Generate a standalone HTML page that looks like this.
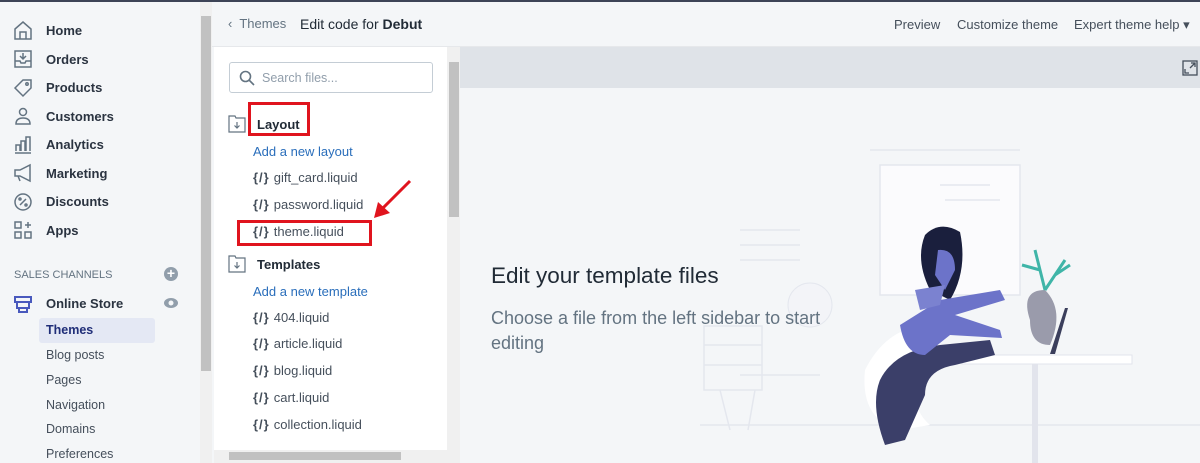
<!DOCTYPE html>
<html><head><style>
*{margin:0;padding:0;box-sizing:border-box}
body{width:1200px;height:463px;overflow:hidden;background:#f4f6f8;font-family:"Liberation Sans",sans-serif;position:relative;color:#212b36}
.topline{position:absolute;left:0;top:0;width:1200px;height:2px;background:#3d4457}
.side{position:absolute;left:0;top:2px;width:200px;height:461px;background:#f4f6f8}
.nav{position:absolute;left:46px;font-size:13px;font-weight:bold;color:#2a3340}
.ic{position:absolute;left:13px}
.sub{position:absolute;left:46px;font-size:12.5px;color:#454f5b}
.sb{position:absolute;background:#f0f0f0}
.thumb{position:absolute;background:#c1c1c1}
.hdr{position:absolute;left:212px;top:2px;width:988px;height:45px;background:#f4f6f8;border-bottom:1px solid #e6e8eb}
.files{position:absolute;left:214px;top:47px;width:233px;height:416px;background:#fff}
.fn{position:absolute;left:253px;font-size:13px;color:#454f5b}
.fn b{font-weight:bold;color:#454f5b;letter-spacing:1px;margin-right:4px}
.lnk{position:absolute;left:253px;font-size:13px;color:#2a6ebb}
.red{position:absolute;border:3px solid #e0141e}
</style></head><body>
<div class="topline"></div>
<div class="side">
<svg class="ic" style="top:18px" width="20" height="20" fill="none" stroke="#637381" stroke-width="1.5"><path d="M2 9 L10 2 L18 9 V19 H2 Z M7 19 V12 H13 V19"/></svg>
<div class="nav" style="top:21px">Home</div>
<svg class="ic" style="top:47px" width="20" height="20" fill="none" stroke="#637381" stroke-width="1.5"><rect x="2" y="2" width="16" height="16"/><path d="M2 12 H7 L8 14 H12 L13 12 H18 M10 4 V10 M7 7 L10 10 L13 7"/></svg>
<div class="nav" style="top:50px">Orders</div>
<svg class="ic" style="top:76px" width="20" height="20" fill="none" stroke="#637381" stroke-width="1.5"><path d="M2 10 L10 2 H18 V10 L10 18 Z"/><circle cx="14" cy="6" r="1.2"/></svg>
<div class="nav" style="top:78px">Products</div>
<svg class="ic" style="top:104px" width="20" height="20" fill="none" stroke="#637381" stroke-width="1.5"><circle cx="10" cy="6" r="3.5"/><path d="M3 18 Q3 12 10 12 Q17 12 17 18 Z"/></svg>
<div class="nav" style="top:107px">Customers</div>
<svg class="ic" style="top:133px" width="20" height="20" fill="none" stroke="#637381" stroke-width="1.5"><path d="M2 18 H18 M3 16 V10 H7 V16 M8 16 V6 H12 V16 M13 16 V2 H17 V16"/></svg>
<div class="nav" style="top:135px">Analytics</div>
<svg class="ic" style="top:161px" width="20" height="20" fill="none" stroke="#637381" stroke-width="1.5"><path d="M2 7 H7 L17 2 V18 L7 13 H2 Z M5 13 L7 18"/></svg>
<div class="nav" style="top:164px">Marketing</div>
<svg class="ic" style="top:190px" width="20" height="20" fill="none" stroke="#637381" stroke-width="1.5"><circle cx="10" cy="10" r="8"/><path d="M7 13 L13 7"/><circle cx="7" cy="7" r="1"/><circle cx="13" cy="13" r="1"/></svg>
<div class="nav" style="top:192px">Discounts</div>
<svg class="ic" style="top:218px" width="20" height="20" fill="none" stroke="#637381" stroke-width="1.5"><rect x="2" y="2" width="6" height="6"/><rect x="2" y="12" width="6" height="6"/><rect x="12" y="12" width="6" height="6"/><path d="M15 2 V8 M12 5 H18"/></svg>
<div class="nav" style="top:221px">Apps</div>
<div style="position:absolute;left:14px;top:267px;font-size:11px;color:#637381">SALES CHANNELS</div>
<div style="position:absolute;left:164px;top:265px;width:14px;height:14px;border-radius:50%;background:#919eab;color:#fff;font-size:14px;line-height:13px;text-align:center;font-weight:bold">+</div>
<svg class="ic" style="top:292px" width="20" height="20" fill="none" stroke="#4959bd" stroke-width="2"><path d="M2 3 H18 V8 H2 Z M4 8 V14 H16 V8 M6 14 V18 H14 V14"/></svg>
<div class="nav" style="top:294px">Online Store</div>
<svg style="position:absolute;left:163px;top:295px" width="16" height="12"><ellipse cx="8" cy="6" rx="7" ry="5" fill="#919eab"/><circle cx="8" cy="6" r="2.5" fill="#f4f6f8"/></svg>
<div style="position:absolute;left:39px;top:316px;width:116px;height:25px;background:#e4e8f4;border-radius:3px"></div>
<div class="sub" style="top:321px;font-weight:bold;color:#202e78">Themes</div>
<div class="sub" style="top:346px">Blog posts</div>
<div class="sub" style="top:371px">Pages</div>
<div class="sub" style="top:396px">Navigation</div>
<div class="sub" style="top:420px">Domains</div>
<div class="sub" style="top:445px">Preferences</div>
</div>
<div class="sb" style="left:200px;top:2px;width:12px;height:461px"></div>
<div class="thumb" style="left:201px;top:16px;width:10px;height:355px"></div>
<div class="hdr">
<div style="position:absolute;left:16px;top:14px;font-size:13px;color:#637381">&#8249;&nbsp; Themes</div>
<div style="position:absolute;left:88px;top:14px;font-size:14px;color:#212b36">Edit code for <b>Debut</b></div>
<div style="position:absolute;left:682px;top:15px;font-size:13px;color:#454f5b">Preview</div>
<div style="position:absolute;left:745px;top:15px;font-size:13px;color:#454f5b">Customize theme</div>
<div style="position:absolute;left:862px;top:15px;font-size:13px;color:#454f5b">Expert theme help &#9662;</div>
</div>
<div class="files"></div>
<div style="position:absolute;left:229px;top:62px;width:204px;height:31px;border:1px solid #c4cdd5;border-radius:3px;background:#fff"></div>
<svg style="position:absolute;left:239px;top:70px" width="16" height="16" fill="none" stroke="#637381" stroke-width="1.6"><circle cx="6.5" cy="6.5" r="5"/><path d="M10 10 L15 15"/></svg>
<div style="position:absolute;left:262px;top:71px;font-size:12.5px;color:#919eab">Search files...</div>
<svg style="position:absolute;left:228px;top:115px" width="18" height="18" fill="none" stroke="#637381" stroke-width="1.2"><path d="M1 1 H7 L8 3 H17 V17 H1 Z M9 7 V13 M6.5 10.5 L9 13 L11.5 10.5"/></svg>
<div style="position:absolute;left:257px;top:117px;font-size:13px;font-weight:bold">Layout</div>
<div class="red" style="left:248px;top:102px;width:62px;height:34px"></div>
<div class="lnk" style="top:144px">Add a new layout</div>
<div class="fn" style="top:170px"><b>{/}</b>gift_card.liquid</div>
<div class="fn" style="top:197px"><b>{/}</b>password.liquid</div>
<div class="fn" style="top:224px"><b>{/}</b>theme.liquid</div>
<div class="red" style="left:237px;top:220px;width:135px;height:26px"></div>
<svg style="position:absolute;left:370px;top:178px" width="45" height="42"><path d="M40 3 L10 33" stroke="#e0141e" stroke-width="3"/><path d="M4 40 L8 24 L20 35 Z" fill="#e0141e"/></svg>
<svg style="position:absolute;left:228px;top:255px" width="18" height="18" fill="none" stroke="#637381" stroke-width="1.2"><path d="M1 1 H7 L8 3 H17 V17 H1 Z M9 7 V13 M6.5 10.5 L9 13 L11.5 10.5"/></svg>
<div style="position:absolute;left:257px;top:257px;font-size:13px;font-weight:bold">Templates</div>
<div class="lnk" style="top:284px">Add a new template</div>
<div class="fn" style="top:310px"><b>{/}</b>404.liquid</div>
<div class="fn" style="top:336px"><b>{/}</b>article.liquid</div>
<div class="fn" style="top:363px"><b>{/}</b>blog.liquid</div>
<div class="fn" style="top:390px"><b>{/}</b>cart.liquid</div>
<div class="fn" style="top:417px"><b>{/}</b>collection.liquid</div>
<div class="sb" style="left:447px;top:47px;width:13px;height:403px"></div>
<div class="thumb" style="left:449px;top:62px;width:10px;height:155px"></div>
<div class="sb" style="left:214px;top:450px;width:246px;height:13px"></div>
<div class="thumb" style="left:229px;top:452px;width:172px;height:8px"></div>
<div style="position:absolute;left:460px;top:47px;width:740px;height:41px;background:#dfe3e8"></div>
<svg style="position:absolute;left:1182px;top:60px" width="16" height="16" fill="none" stroke="#454f5b" stroke-width="1.3"><rect x="1" y="1" width="14" height="14"/><path d="M8 8 L13 3 M9 3 H13 V7 M3 9 V13 H7"/></svg>
<svg style="position:absolute;left:700px;top:140px" width="500" height="323">
<g fill="none" stroke="#e4e7ee" stroke-width="1.5">
<rect x="180" y="25" width="140" height="130" fill="#fbfbfd"/>
<path d="M170 10 H320 M0 285 H500 M40 235 H120 M4 186 H62 V250 H4 Z M4 205 H62 M4 225 H62 M20 250 L30 290 M55 250 L48 290"/>
<path d="M40 90 H100 M40 105 H100 M40 120 H100 M240 45 H290 M245 60 H300"/>
</g>
<circle cx="110" cy="165" r="22" fill="#f3f4f8" stroke="#e4e7ee"/>
<path d="M165 230 Q180 200 205 190 L230 200 Q200 260 230 285 L200 290 Q160 280 165 230Z" fill="#fff"/>
<rect x="262" y="215" width="170" height="9" fill="#fff" stroke="#e2e4ec"/>
<rect x="332" y="224" width="6" height="100" fill="#e2e4ec"/>
<path d="M300 214 L350 214 L365 168 L368 168 L355 214 Z" fill="#3b3f5c"/>
<path d="M330 180 Q320 150 345 150 Q365 170 350 205 Q330 205 330 180Z" fill="#9a9bab"/>
<g stroke="#3fb5a8" stroke-width="3" fill="none"><path d="M345 150 L335 110 M345 150 L365 120 M340 130 L322 125 M355 135 L370 125"/></g>
<path d="M225 95 Q240 80 260 92 Q268 130 250 160 L230 150 Q215 120 225 95Z" fill="#1a1f3d"/>
<path d="M238 110 Q255 108 255 130 L245 150 L235 135Z" fill="#6c73c9"/>
<path d="M180 240 Q195 210 240 205 L290 200 L295 215 L255 225 Q225 230 225 255 L205 300 L185 305 Q170 265 180 240Z" fill="#3b3f69"/>
<path d="M200 185 L240 160 L300 150 L305 160 L255 175 L300 190 L302 198 L250 195 L225 215 Q205 215 200 185Z" fill="#6c73c9"/>
<path d="M215 150 L245 145 L240 165 L220 170Z" fill="#7b82d0"/>
</svg>
<div style="position:absolute;left:491px;top:263px;font-size:22.5px;color:#212b36">Edit your template files</div>
<div style="position:absolute;left:491px;top:306px;font-size:18px;line-height:25px;color:#637381;width:345px">Choose a file from the left sidebar to start editing</div>
</body></html>
